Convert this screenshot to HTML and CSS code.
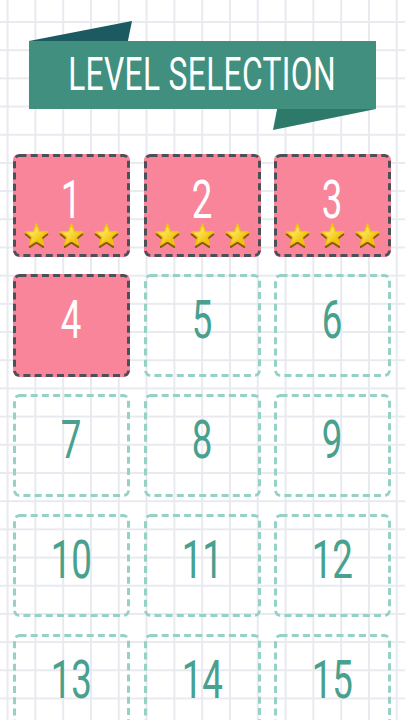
FILE: index.html
```html
<!DOCTYPE html>
<html lang="en">
<head>
<meta charset="utf-8">
<title>Level Selection</title>
<link rel="stylesheet" href="styles.css">
</head>
<body>
<svg class="defs" width="0" height="0" aria-hidden="true">
  <defs>
    <linearGradient id="starFill" x1="0" y1="0" x2="1" y2="1">
      <stop offset="0" stop-color="#fffbd0"/>
      <stop offset="0.35" stop-color="#fbe55a"/>
      <stop offset="0.7" stop-color="#f3c511"/>
      <stop offset="1" stop-color="#e2a606"/>
    </linearGradient>
    <path id="star" d="M13 0 L16.06 7.79 L24.41 8.29 L17.95 13.61 L20.05 21.71 L13 17.2 L5.95 21.71 L8.05 13.61 L1.59 8.29 L9.94 7.79 Z"/>
    <g id="starIcon">
      <use href="#star" transform="translate(0 2.4)" fill="#8c5a0e" stroke="#8c5a0e" stroke-width="1.8" stroke-linejoin="round"/>
      <use href="#star" fill="url(#starFill)" stroke="#f1c212" stroke-width="1.6" stroke-linejoin="round"/>
    </g>
  </defs>
</svg>

<header class="header">
  <div class="banner">
    <h1 class="banner-title">LEVEL SELECTION</h1>
  </div>
</header>

<main class="levels">
  <div class="level level-done">
    <span class="level-num">1</span>
    <div class="stars">
      <svg class="star" viewBox="-1 -1 28 27"><use href="#starIcon"/></svg>
      <svg class="star" viewBox="-1 -1 28 27"><use href="#starIcon"/></svg>
      <svg class="star" viewBox="-1 -1 28 27"><use href="#starIcon"/></svg>
    </div>
  </div>
  <div class="level level-done">
    <span class="level-num">2</span>
    <div class="stars">
      <svg class="star" viewBox="-1 -1 28 27"><use href="#starIcon"/></svg>
      <svg class="star" viewBox="-1 -1 28 27"><use href="#starIcon"/></svg>
      <svg class="star" viewBox="-1 -1 28 27"><use href="#starIcon"/></svg>
    </div>
  </div>
  <div class="level level-done">
    <span class="level-num">3</span>
    <div class="stars">
      <svg class="star" viewBox="-1 -1 28 27"><use href="#starIcon"/></svg>
      <svg class="star" viewBox="-1 -1 28 27"><use href="#starIcon"/></svg>
      <svg class="star" viewBox="-1 -1 28 27"><use href="#starIcon"/></svg>
    </div>
  </div>
  <div class="level level-done"><span class="level-num">4</span></div>
  <div class="level"><span class="level-num">5</span></div>
  <div class="level"><span class="level-num">6</span></div>
  <div class="level"><span class="level-num">7</span></div>
  <div class="level"><span class="level-num">8</span></div>
  <div class="level"><span class="level-num">9</span></div>
  <div class="level"><span class="level-num">10</span></div>
  <div class="level"><span class="level-num">11</span></div>
  <div class="level"><span class="level-num">12</span></div>
  <div class="level"><span class="level-num">13</span></div>
  <div class="level"><span class="level-num">14</span></div>
  <div class="level"><span class="level-num">15</span></div>
</main>
</body>
</html>
```

FILE: styles.css
```css
html {
  background-color: #ffffff;
  background-image:
    linear-gradient(to right, #e8eaf0 1.5px, transparent 1.5px),
    linear-gradient(to bottom, #e8eaf0 1.5px, transparent 1.5px);
  background-size: 27.8px 28.2px;
  background-position: 6.6px 21px;
}

body {
  margin: 0;
  height: 720px;
  overflow: hidden;
  font-family: Roboto, "Liberation Sans", sans-serif;
}

.defs {
  position: absolute;
  width: 0;
  height: 0;
}

/* ribbon header */
.header {
  padding-top: 41px;
}

.banner {
  position: relative;
  margin-left: 29px;
  width: 347px;
  height: 68px;
  background: #418f7f;
  display: flex;
  align-items: center;
  justify-content: center;
}

.banner::before {
  content: "";
  position: absolute;
  left: 0;
  top: -20px;
  width: 103px;
  height: 20px;
  background: #1b5a61;
  clip-path: polygon(0 100%, 100% 0, 96% 100%);
}

.banner::after {
  content: "";
  position: absolute;
  right: 0;
  bottom: -21px;
  width: 103px;
  height: 21px;
  background: #2e7a6a;
  clip-path: polygon(4% 0, 100% 0, 0 100%);
}

.banner-title {
  margin: 0;
  color: #ffffff;
  font-size: 46px;
  font-weight: 400;
  line-height: 1;
  letter-spacing: 0.5px;
  white-space: nowrap;
  transform: scaleX(0.69);
  padding-bottom: 2px;
}

/* level grid */
.levels {
  display: grid;
  grid-template-columns: repeat(3, 117px);
  grid-auto-rows: 103px;
  column-gap: 13.5px;
  row-gap: 17px;
  padding: 0 0 0 13px;
  margin-top: 45px;
}

.level {
  position: relative;
  border-radius: 6px;
  display: flex;
  align-items: center;
  justify-content: center;
  padding-bottom: 11px;
  box-sizing: border-box;
  background-image: url("data:image/svg+xml,%3Csvg xmlns='http://www.w3.org/2000/svg' width='117' height='103'%3E%3Crect x='1.5' y='1.5' width='114' height='100' rx='5' fill='none' stroke='%2395d1c5' stroke-width='3' stroke-dasharray='7 4.2'/%3E%3C/svg%3E");
}

.level-done {
  background-color: #f8859a;
  background-image: url("data:image/svg+xml,%3Csvg xmlns='http://www.w3.org/2000/svg' width='117' height='103'%3E%3Crect x='1.5' y='1.5' width='114' height='100' rx='5' fill='none' stroke='%234b4f58' stroke-width='3' stroke-dasharray='7 4.2'/%3E%3C/svg%3E");
}

.level-num {
  font-size: 54px;
  line-height: 1;
  font-weight: 400;
  color: #48a08e;
  transform: scaleX(0.68);
}

.level-done .level-num {
  color: #ffffff;
}

.stars {
  position: absolute;
  left: 0;
  right: 0;
  bottom: 8px;
  display: flex;
  justify-content: center;
  gap: 8px;
}

.star {
  width: 27px;
  height: 26px;
  display: block;
}
```
